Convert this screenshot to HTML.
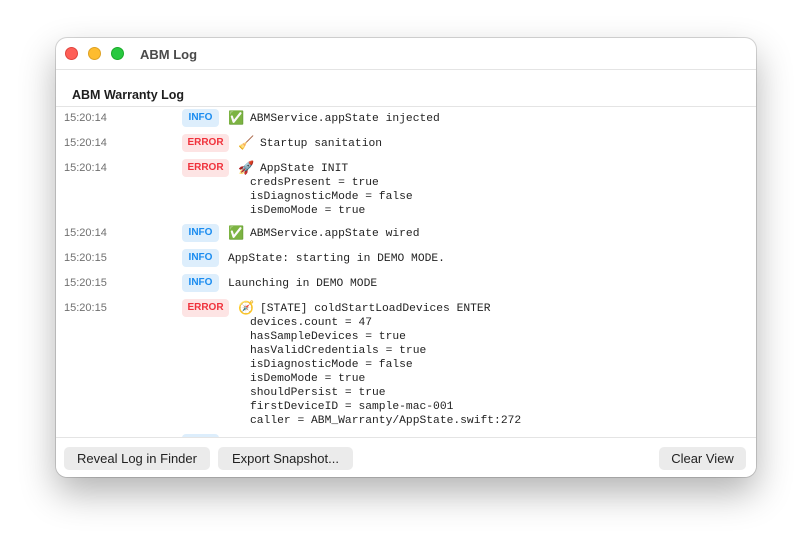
<!DOCTYPE html>
<html><head><meta charset="utf-8"><style>
*{margin:0;padding:0;box-sizing:border-box}
body{width:812px;height:552px;background:#fff;position:relative;overflow:hidden;font-family:"Liberation Sans",sans-serif}
.win{position:absolute;left:56px;top:38px;width:700px;height:439px;background:#fff;border-radius:11px;box-shadow:0 16px 36px rgba(0,0,0,.3),0 0 0 1px rgba(0,0,0,.15);overflow:hidden}
.dot{position:absolute;top:9px;width:13px;height:13px;border-radius:50%}
.title{position:absolute;left:84px;top:9px;font-size:13px;font-weight:bold;color:#4a4a4a}
.hl{position:absolute;left:0;right:0;height:1px;background:#e4e4e4}
.hdr{position:absolute;left:16px;top:50px;font-size:12.5px;font-weight:bold;color:#1e1e1e}
.a{position:absolute;white-space:pre}
.t{font-size:11px;color:#707070;left:8px}
.b{font-size:10px;font-weight:bold;height:18px;line-height:18px;text-align:center;border-radius:4px;left:126px}
.i{background:#ddeefc;color:#1a8cf0;width:37px}
.e{background:#fde4e4;color:#f0323c;width:47px}
.m{font-family:"Liberation Mono",monospace;font-size:11.3px;color:#222;line-height:14px}
.em{font-size:13px;line-height:14px}
.btn{position:absolute;top:409px;height:23px;line-height:23px;background:#ebebeb;border-radius:5px;font-size:13px;color:#222;text-align:center}
</style></head><body>
<div class="win">
<div class="dot" style="left:9px;background:#fe5f57;border:1px solid #e0443e"></div>
<div class="dot" style="left:32px;background:#febc2e;border:1px solid #dea123"></div>
<div class="dot" style="left:55px;background:#28c840;border:1px solid #1aab29"></div>
<div class="title">ABM Log</div>
<div class="hl" style="top:31px"></div>
<div class="hdr">ABM Warranty Log</div>
<div class="hl" style="top:68px"></div>

<div class="a t" style="top:74px">15:20:14</div>
<div class="a b i" style="top:71px">INFO</div>
<div class="a em" style="left:172px;top:73px">✅</div>
<div class="a m" style="left:194px;top:74px">ABMService.appState injected</div>

<div class="a t" style="top:99px">15:20:14</div>
<div class="a b e" style="top:96px">ERROR</div>
<div class="a em" style="left:182px;top:98px">🧹</div>
<div class="a m" style="left:204px;top:99px">Startup sanitation</div>

<div class="a t" style="top:124px">15:20:14</div>
<div class="a b e" style="top:121px">ERROR</div>
<div class="a em" style="left:182px;top:123px">🚀</div>
<div class="a m" style="left:204px;top:124px">AppState INIT</div>
<div class="a m" style="left:194px;top:138px">credsPresent = true
isDiagnosticMode = false
isDemoMode = true</div>

<div class="a t" style="top:189px">15:20:14</div>
<div class="a b i" style="top:186px">INFO</div>
<div class="a em" style="left:172px;top:188px">✅</div>
<div class="a m" style="left:194px;top:189px">ABMService.appState wired</div>

<div class="a t" style="top:214px">15:20:15</div>
<div class="a b i" style="top:211px">INFO</div>
<div class="a m" style="left:172px;top:214px">AppState: starting in DEMO MODE.</div>

<div class="a t" style="top:239px">15:20:15</div>
<div class="a b i" style="top:236px">INFO</div>
<div class="a m" style="left:172px;top:239px">Launching in DEMO MODE</div>

<div class="a t" style="top:264px">15:20:15</div>
<div class="a b e" style="top:261px">ERROR</div>
<div class="a em" style="left:182px;top:263px">🧭</div>
<div class="a m" style="left:204px;top:264px">[STATE] coldStartLoadDevices ENTER</div>
<div class="a m" style="left:194px;top:278px">devices.count = 47
hasSampleDevices = true
hasValidCredentials = true
isDiagnosticMode = false
isDemoMode = true
shouldPersist = true
firstDeviceID = sample-mac-001
caller = ABM_Warranty/AppState.swift:272</div>

<div class="a b i" style="top:396px">INFO</div>
<div style="position:absolute;left:0;right:0;top:399px;height:40px;background:#fff"></div>
<div class="hl" style="top:399px"></div>
<div class="btn" style="left:8px;width:146px">Reveal Log in Finder</div>
<div class="btn" style="left:162px;width:135px">Export Snapshot...</div>
<div class="btn" style="left:603px;width:87px">Clear View</div>
</div>
</body></html>
